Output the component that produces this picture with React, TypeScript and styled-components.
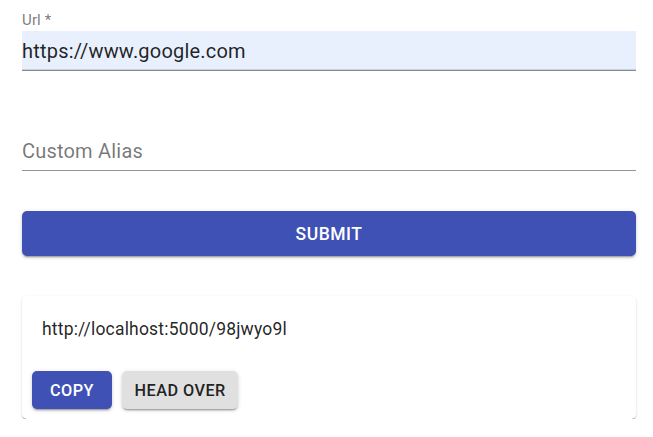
import React from "react";
import styled, { createGlobalStyle } from "styled-components";

const Global = createGlobalStyle`
  html, body { margin: 0; padding: 0; background: #fff; }
  body { font-family: Roboto, "Liberation Sans", Arial, sans-serif; }
  * { box-sizing: border-box; }
`;

const Page = styled.div`
  width: 614px;
  margin-left: 22px;
  padding-top: 11px;
  display: flex;
  flex-direction: column;
`;

const Field = styled.div<{ $gap?: number }>`
  position: relative;
  display: flex;
  flex-direction: column;
  padding-top: 20px;
  margin-bottom: ${(p) => p.$gap ?? 0}px;
`;

const Label = styled.label`
  position: absolute;
  left: 0;
  top: 2px;
  font-size: 15px;
  line-height: 1;
  color: rgba(0, 0, 0, 0.54);
  letter-spacing: 0.01em;
`;

const InputBox = styled.div<{ $filled?: boolean }>`
  height: 40px;
  padding: 9px 0 6px;
  background: ${(p) => (p.$filled ? "#e8f0fe" : "transparent")};
  border-bottom: 1px solid rgba(0, 0, 0, 0.42);
  box-shadow: ${(p) => (p.$filled ? "inset 0 -1px 0 #c9cfdc" : "none")};
  display: flex;
  align-items: center;
`;

const InputText = styled.span<{ $placeholder?: boolean }>`
  font-size: 20px;
  line-height: 23.75px;
  letter-spacing: 0.01em;
  color: ${(p) => (p.$placeholder ? "rgba(0,0,0,0.54)" : "rgba(0,0,0,0.87)")};
`;

const Button = styled.button<{ $variant: "primary" | "default"; $size?: "small" | "full" }>`
  border: none;
  border-radius: 5px;
  font-family: Roboto, "Liberation Sans", Arial, sans-serif;
  font-weight: 500;
  text-transform: uppercase;
  letter-spacing: 0.02857em;
  cursor: pointer;
  background: ${(p) => (p.$variant === "primary" ? "#3f51b5" : "#e0e0e0")};
  color: ${(p) => (p.$variant === "primary" ? "#fff" : "rgba(0,0,0,0.87)")};
  box-shadow: 0px 3px 1px -2px rgba(0, 0, 0, 0.2), 0px 2px 2px 0px rgba(0, 0, 0, 0.14),
    0px 1px 5px 0px rgba(0, 0, 0, 0.12);
  ${(p) =>
    p.$size === "full"
      ? `width: 100%; height: 45px; font-size: 17.5px;`
      : `height: 38px; min-width: 80px; padding: 0 12.5px; font-size: 16.25px;`}
`;

const SubmitRow = styled.div`
  margin-top: 40px;
  margin-bottom: 40px;
  display: flex;
`;

const Card = styled.div`
  background: #fff;
  border-radius: 5px;
  box-shadow: 0px 2px 1px -1px rgba(0, 0, 0, 0.2), 0px 1px 1px 0px rgba(0, 0, 0, 0.14),
    0px 1px 3px 0px rgba(0, 0, 0, 0.12);
  display: flex;
  flex-direction: column;
`;

const CardContent = styled.div`
  padding: 21px 20px 19px;
`;

const LinkText = styled.p`
  margin: 0;
  font-size: 17.5px;
  line-height: 25px;
  letter-spacing: 0.01071em;
  color: rgba(0, 0, 0, 0.87);
`;

const CardActions = styled.div`
  display: flex;
  align-items: center;
  gap: 10px;
  padding: 10px;
`;

export default function App() {
  return (
    <>
      <Global />
      <Page>
        <Field $gap={40}>
          <Label>Url *</Label>
          <InputBox $filled>
            <InputText>https://www.google.com</InputText>
          </InputBox>
        </Field>
        <Field>
          <InputBox>
            <InputText $placeholder>Custom Alias</InputText>
          </InputBox>
        </Field>
        <SubmitRow>
          <Button $variant="primary" $size="full">Submit</Button>
        </SubmitRow>
        <Card>
          <CardContent>
            <LinkText>http://localhost:5000/98jwyo9l</LinkText>
          </CardContent>
          <CardActions>
            <Button $variant="primary" $size="small">Copy</Button>
            <Button $variant="default" $size="small">Head Over</Button>
          </CardActions>
        </Card>
      </Page>
    </>
  );
}
